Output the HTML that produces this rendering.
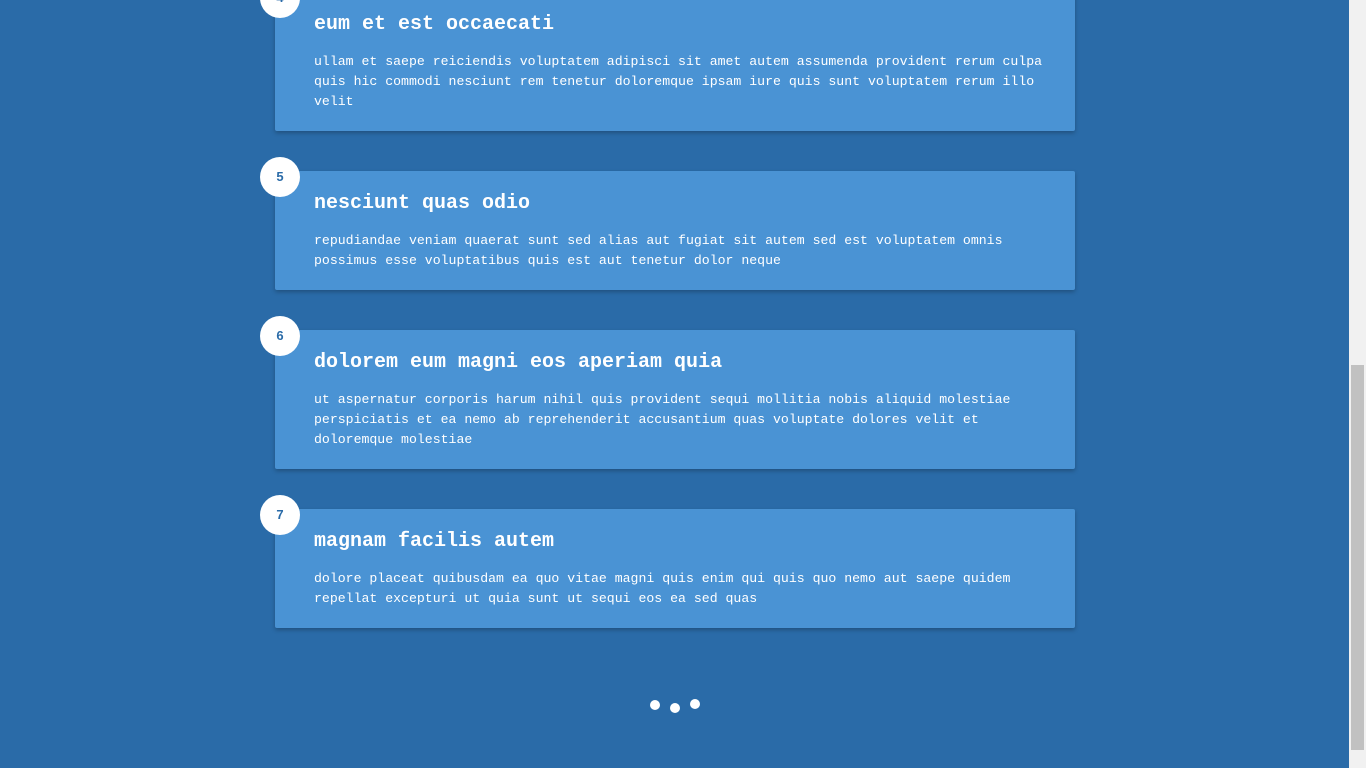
<!DOCTYPE html>
<html><head><style>
html,body{margin:0;padding:0;}
body{width:1366px;height:768px;overflow:hidden;background:#2a6ba8;position:relative;font-family:"Liberation Mono","DejaVu Sans Mono",monospace;}
.card{position:absolute;left:275px;width:800px;background:#4a93d4;border-radius:2px;box-shadow:0 2px 4px rgba(0,0,0,.25);box-sizing:border-box;padding:20px 24px 20px 39px;color:#fff;}
.card h2{margin:0;font-size:20px;line-height:26px;font-weight:bold;}
.card p{margin:14px 0 0;font-size:13.2px;line-height:20px;}
.num{position:absolute;left:-15px;top:-14px;width:40px;height:40px;border-radius:50%;background:#fff;color:#2a6ba8;font-weight:bold;font-size:13px;text-align:center;line-height:40px;font-family:"Liberation Sans",sans-serif;}
.dot{position:absolute;width:10px;height:10px;border-radius:50%;background:#fff;}
.sb{position:absolute;right:0;top:0;width:17px;height:768px;background:#f1f1f1;}
.th{position:absolute;left:2px;right:2px;top:365px;height:385px;background:#c1c1c1;}
</style></head><body>
<div class="card" style="top:-8px;height:139px"><div class="num">4</div><h2>eum et est occaecati</h2><p>ullam et saepe reiciendis voluptatem adipisci sit amet autem assumenda provident rerum culpa quis hic commodi nesciunt rem tenetur doloremque ipsam iure quis sunt voluptatem rerum illo velit</p></div>
<div class="card" style="top:171px;height:119px"><div class="num">5</div><h2>nesciunt quas odio</h2><p>repudiandae veniam quaerat sunt sed alias aut fugiat sit autem sed est voluptatem omnis possimus esse voluptatibus quis est aut tenetur dolor neque</p></div>
<div class="card" style="top:330px;height:139px"><div class="num">6</div><h2>dolorem eum magni eos aperiam quia</h2><p>ut aspernatur corporis harum nihil quis provident sequi mollitia nobis aliquid molestiae perspiciatis et ea nemo ab reprehenderit accusantium quas voluptate dolores velit et doloremque molestiae</p></div>
<div class="card" style="top:509px;height:119px"><div class="num">7</div><h2>magnam facilis autem</h2><p>dolore placeat quibusdam ea quo vitae magni quis enim qui quis quo nemo aut saepe quidem repellat excepturi ut quia sunt ut sequi eos ea sed quas</p></div>
<div class="dot" style="left:650px;top:700px"></div>
<div class="dot" style="left:670px;top:703px"></div>
<div class="dot" style="left:690px;top:699px"></div>
<div class="sb"><div class="th"></div></div>
</body></html>
